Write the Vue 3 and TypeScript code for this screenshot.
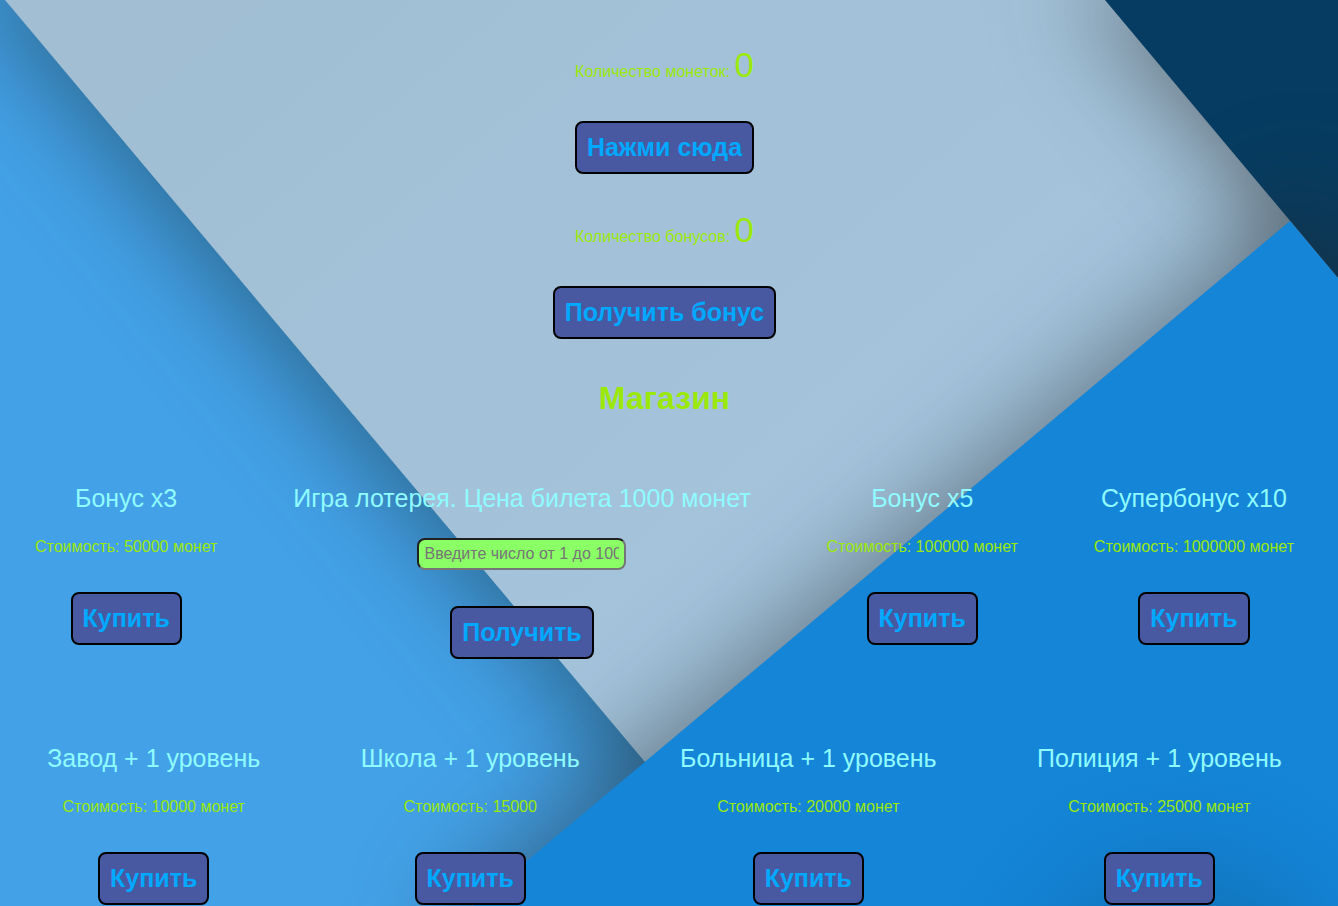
<script setup lang="ts">
import { ref } from 'vue'

interface Upgrade {
  id: string
  title: string
  price?: string
  lottery?: boolean
}

const coins = ref<number>(0)
const bonuses = ref<number>(0)
const guess = ref<string>('')

const rows: Upgrade[][] = [
  [
    { id: 'x3', title: 'Бонус x3', price: 'Стоимость: 50000 монет' },
    { id: 'lottery', title: 'Игра лотерея. Цена билета 1000 монет', lottery: true },
    { id: 'x5', title: 'Бонус x5', price: 'Стоимость: 100000 монет' },
    { id: 'x10', title: 'Супербонус x10', price: 'Стоимость: 1000000 монет' },
  ],
  [
    { id: 'factory', title: 'Завод + 1 уровень', price: 'Стоимость: 10000 монет' },
    { id: 'school', title: 'Школа + 1 уровень', price: 'Стоимость: 15000' },
    { id: 'hospital', title: 'Больница + 1 уровень', price: 'Стоимость: 20000 монет' },
    { id: 'police', title: 'Полиция + 1 уровень', price: 'Стоимость: 25000 монет' },
  ],
]
</script>

<template>
  <div class="page">
    <svg class="backdrop" viewBox="0 0 1338 906" preserveAspectRatio="xMidYMid slice" aria-hidden="true">
      <defs>
        <filter id="soft" filterUnits="userSpaceOnUse" x="-400" y="-400" width="2200" height="1800" color-interpolation-filters="sRGB">
          <feGaussianBlur stdDeviation="50" />
        </filter>
        <linearGradient id="sheet" gradientUnits="userSpaceOnUse" x1="200" y1="0" x2="700" y2="600">
          <stop offset="0" stop-color="#a1bed3" />
          <stop offset="1" stop-color="#a4c4dc" />
        </linearGradient>
        <radialGradient id="pool" gradientUnits="userSpaceOnUse" cx="1185" cy="1010" r="290">
          <stop offset="0" stop-color="#0d5f9f" />
          <stop offset="0.35" stop-color="#1073b9" stop-opacity="0.85" />
          <stop offset="0.65" stop-color="#127ccb" stop-opacity="0.5" />
          <stop offset="1" stop-color="#1485d7" stop-opacity="0" />
        </radialGradient>
      </defs>
      <rect width="1338" height="906" fill="#43a1e7" />
      <polygon points="-50,-40 650,800 1400,800 1400,-40" fill="#1c3a48" fill-opacity="0.55" filter="url(#soft)" />
      <polygon points="5,0 645,762 1338,762 1338,0" fill="url(#sheet)" />
      <polygon points="1070,-20 1400,374 1600,374 1600,-20" fill="#2a2a2a" fill-opacity="0.52" filter="url(#soft)" />
      <polygon points="1105,0 1338,278 1338,0" fill="#063c61" />
      <polygon points="1310,185 453,904 453,1100 1600,1100 1600,591" fill="#222a30" fill-opacity="0.48" filter="url(#soft)" />
      <polygon points="1290,221 473,906 1338,906 1338,278" fill="#1485d7" />
      <polygon points="1290,221 473,906 1338,906 1338,278" fill="url(#pool)" />
    </svg>

    <main class="game">
      <p class="counter">Количество монеток: <span class="value">{{ coins }}</span></p>
      <button type="button" class="action" @click="coins++">Нажми сюда</button>
      <p class="counter">Количество бонусов: <span class="value">{{ bonuses }}</span></p>
      <button type="button" class="action">Получить бонус</button>

      <h1 class="shop-title">Магазин</h1>

      <section class="shop">
        <div v-for="(row, i) in rows" :key="i" class="row">
          <article v-for="item in row" :key="item.id" class="item">
            <h2 class="name">{{ item.title }}</h2>
            <input
              v-if="item.lottery"
              v-model="guess"
              class="guess"
              type="text"
              aria-label="Введите число от 1 до 100"
              placeholder="Введите число от 1 до 100"
            />
            <p v-else class="price">{{ item.price }}</p>
            <button type="button" class="action">{{ item.lottery ? 'Получить' : 'Купить' }}</button>
          </article>
        </div>
      </section>
    </main>
  </div>
</template>

<style>
body {
  margin: 0;
}
</style>

<style scoped>
.page {
  position: relative;
  overflow: hidden;
  min-height: 100vh;
  font-family: "Liberation Sans", Arial, sans-serif;
  font-size: 16px;
  line-height: 18px;
  color: #9be90a;
}

.backdrop {
  position: absolute;
  inset: 0;
  width: 100%;
  height: 100%;
}

.game {
  position: relative;
  display: flex;
  flex-direction: column;
  align-items: center;
  padding: 45px 9px 0 0;
}

.counter {
  margin: 0 0 36px;
}

.value {
  font-size: 35px;
  line-height: 40px;
}

.action {
  margin: 0 0 36px;
  padding: 10px;
  border: 2px solid #000;
  border-radius: 8px;
  background: #4859a1;
  color: #00a9ff;
  font-family: inherit;
  font-size: 25px;
  font-weight: bold;
  line-height: 29px;
  cursor: pointer;
}

.shop-title {
  margin: 5px 0 67px;
  font-size: 32px;
  line-height: 37px;
}

.shop {
  align-self: stretch;
  display: flex;
  flex-direction: column;
  gap: 85px;
  margin: 0 -3px;
}

.row {
  display: flex;
  justify-content: space-around;
  align-items: flex-start;
}

.item {
  display: flex;
  flex-direction: column;
  align-items: center;
}

.item .action {
  margin-bottom: 0;
}

.name {
  margin: 0 0 25px;
  color: #8ffbff;
  font-size: 25px;
  font-weight: normal;
  line-height: 29px;
}

.price {
  margin: 0 0 36px;
}

.guess {
  box-sizing: border-box;
  width: 209px;
  height: 32px;
  margin: 0 0 36px;
  padding: 5px;
  border: 2px inset #767676;
  border-radius: 8px;
  background: #8bff66;
  color: #333;
  font-family: inherit;
  font-size: 16px;
}

.guess::placeholder {
  color: #757575;
}
</style>
